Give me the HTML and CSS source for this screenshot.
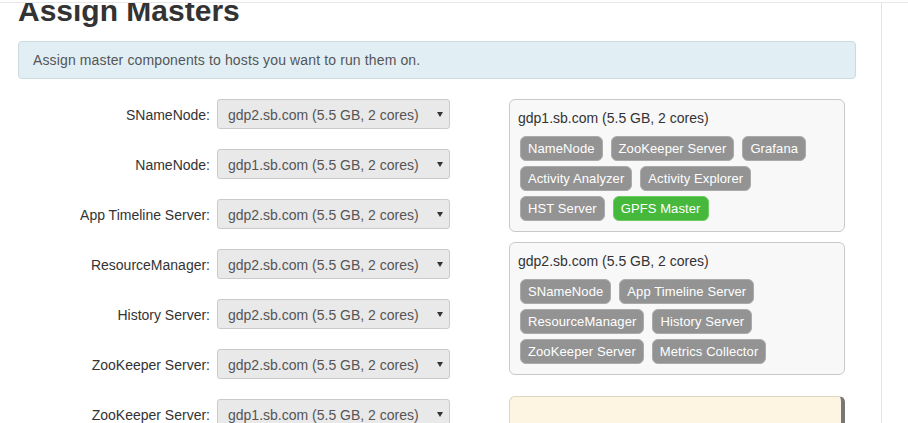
FILE: index.html
```html
<!DOCTYPE html>
<html>
<head>
<meta charset="utf-8">
<link rel="stylesheet" href="styles.css">
</head>
<body>
<div class="page">
  <div class="main">
    <h1 class="title">Assign Masters</h1>
    <div class="alert">Assign master components to hosts you want to run them on.</div>
    <div class="assign">
      <div class="form">
        <div class="row"><div class="label">SNameNode:</div><div class="select"><span>gdp2.sb.com (5.5 GB, 2 cores)</span><i class="caret"></i></div></div>
        <div class="row"><div class="label">NameNode:</div><div class="select"><span>gdp1.sb.com (5.5 GB, 2 cores)</span><i class="caret"></i></div></div>
        <div class="row"><div class="label">App Timeline Server:</div><div class="select"><span>gdp2.sb.com (5.5 GB, 2 cores)</span><i class="caret"></i></div></div>
        <div class="row"><div class="label">ResourceManager:</div><div class="select"><span>gdp2.sb.com (5.5 GB, 2 cores)</span><i class="caret"></i></div></div>
        <div class="row"><div class="label">History Server:</div><div class="select"><span>gdp2.sb.com (5.5 GB, 2 cores)</span><i class="caret"></i></div></div>
        <div class="row"><div class="label">ZooKeeper Server:</div><div class="select"><span>gdp2.sb.com (5.5 GB, 2 cores)</span><i class="caret"></i></div></div>
        <div class="row"><div class="label">ZooKeeper Server:</div><div class="select"><span>gdp1.sb.com (5.5 GB, 2 cores)</span><i class="caret"></i></div></div>
      </div>
      <div class="hosts">
        <div class="host">
          <div class="host-title">gdp1.sb.com (5.5 GB, 2 cores)</div>
          <div class="badges">
            <span class="badge">NameNode</span>
            <span class="badge">ZooKeeper Server</span>
            <span class="badge">Grafana</span>
            <span class="badge">Activity Analyzer</span>
            <span class="badge">Activity Explorer</span>
            <span class="badge">HST Server</span>
            <span class="badge badge-new">GPFS Master</span>
          </div>
        </div>
        <div class="host">
          <div class="host-title">gdp2.sb.com (5.5 GB, 2 cores)</div>
          <div class="badges">
            <span class="badge">SNameNode</span>
            <span class="badge">App Timeline Server</span>
            <span class="badge">ResourceManager</span>
            <span class="badge">History Server</span>
            <span class="badge">ZooKeeper Server</span>
            <span class="badge">Metrics Collector</span>
          </div>
        </div>
        <div class="host host-warn"></div>
      </div>
    </div>
  </div>
</div>
</body>
</html>
```

FILE: styles.css
```css
html, body {
  margin: 0;
  padding: 0;
  background: #fff;
  overflow: hidden;
}
body {
  font-family: "Liberation Sans", Arial, sans-serif;
  color: #333;
  font-size: 14px;
}
.page {
  margin-top: 2px;
  border-top: 1px solid #e8e8e8;
  height: 420px;
  overflow: hidden;
}
.main {
  display: flow-root;
  width: 863px;
  height: 420px;
  padding-left: 18px;
  border-right: 1px solid #e3e3e3;
}
.title {
  margin: -10px 0 12px;
  font-size: 30px;
  line-height: 36px;
  font-weight: bold;
  color: #333;
}
.alert {
  box-sizing: border-box;
  width: 838px;
  padding: 9px 14px;
  font-size: 14px;
  line-height: 18px;
  letter-spacing: 0.13px;
  color: #555;
  background: #e1eff5;
  border: 1px solid #cbdbe2;
  border-radius: 4px;
}
.assign {
  margin-top: 20px;
  display: grid;
  grid-template-columns: 491px 336px;
}
.form {
  display: flex;
  flex-direction: column;
  gap: 20px;
}
.row {
  display: flex;
  align-items: center;
  gap: 7px;
  height: 30px;
}
.label {
  width: 192px;
  text-align: right;
  font-size: 14px;
  color: #333;
  padding-top: 2px;
}
.select {
  box-sizing: border-box;
  width: 233px;
  height: 30px;
  display: flex;
  align-items: center;
  padding: 2px 6px 0 10px;
  background: #e9e9e9;
  border: 1px solid #cacaca;
  border-radius: 3px;
  color: #555;
  font-size: 14px;
}
.caret {
  margin-left: auto;
  width: 0;
  height: 0;
  border-left: 3px solid transparent;
  border-right: 3px solid transparent;
  border-top: 5px solid #333;
  margin-bottom: 2px;
}
.hosts {
  display: flex;
  flex-direction: column;
}
.host {
  box-sizing: border-box;
  width: 336px;
  padding: 8px 8px 10px;
  background: #f8f8f8;
  border: 1px solid #c9c9c9;
  border-radius: 6px;
  margin-bottom: 10px;
}
.host-title {
  font-size: 14px;
  line-height: 20px;
  color: #333;
  margin-bottom: 8px;
}
.badges {
  display: flex;
  flex-wrap: wrap;
  gap: 5px 8px;
  padding-left: 2px;
}
.badge {
  box-sizing: border-box;
  height: 25px;
  line-height: 23px;
  padding: 0 7px;
  font-size: 13px;
  letter-spacing: 0.1px;
  color: #fff;
  background: #939393;
  border: 1px solid #ababab;
  border-radius: 6px;
}
.badge-new {
  background: #46b83c;
  border-color: #6ccb63;
}
.host-warn {
  margin-top: 11px;
  height: 40px;
  background: #fdf5e2;
  border: 1px solid #ddd6c4;
  border-right: 4px solid #777;
  border-radius: 6px;
}
```
